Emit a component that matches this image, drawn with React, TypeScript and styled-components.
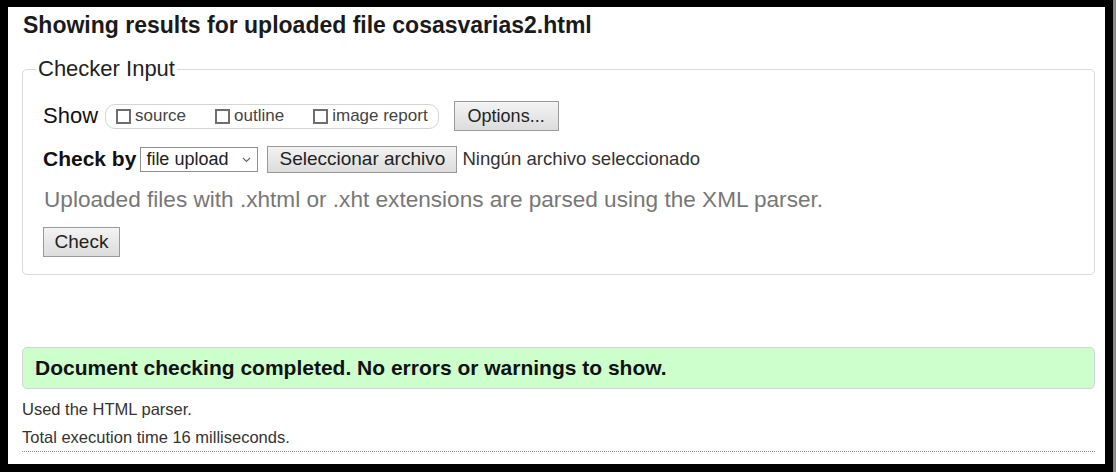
import React from "react";
import styled, { createGlobalStyle } from "styled-components";

const Global = createGlobalStyle`
  html, body { margin: 0; padding: 0; background: #000; }
  body { font-family: "Liberation Sans", Arial, sans-serif; color: #222; }
`;

const Frame = styled.div`
  width: 1116px;
  height: 472px;
  box-sizing: border-box;
  padding: 7px 8px 0 8px;
  background: #000;
  border-right: 3px solid #8a8a8a;
  overflow: hidden;
`;

const Page = styled.div`
  width: 1097px;
  height: 457px;
  background: #fff;
  box-sizing: border-box;
  padding: 4px 10px 0 14px;
  display: flex;
  flex-direction: column;
`;

const Title = styled.h2`
  margin: 0;
  padding-left: 1px;
  font-size: 23px;
  font-weight: bold;
  color: #1a1a1a;
  line-height: 28px;
`;

const Fieldset = styled.fieldset`
  margin: 17px 0 0 0;
  padding: 19px 20px 17px 20px;
  border: 1px solid #d9d9d9;
  border-radius: 5px;
  display: flex;
  flex-direction: column;
  align-items: flex-start;
`;

const Legend = styled.legend`
  font-size: 22px;
  line-height: 26px;
  color: #222;
  padding: 0 2px;
  margin-left: -7px;
`;

const Row = styled.div<{ mb?: number }>`
  display: flex;
  align-items: center;
  height: 30px;
  margin-bottom: ${(p) => p.mb ?? 0}px;
`;

const Label = styled.span<{ bold?: boolean }>`
  font-size: ${(p) => (p.bold ? 21 : 22)}px;
  color: #111;
  font-weight: ${(p) => (p.bold ? "bold" : "normal")};
  margin-right: ${(p) => (p.bold ? 4 : 7)}px;
`;

const Pill = styled.div`
  display: flex;
  align-items: center;
  height: 25px;
  box-sizing: border-box;
  border: 1px solid #d4d4d4;
  border-radius: 10px;
  padding: 0 10px 0 10px;
  gap: 29px;
`;

const CheckItem = styled.label`
  display: flex;
  align-items: center;
  font-size: 17px;
  color: #444;
  gap: 4px;
`;

const Box = styled.span`
  width: 15px;
  height: 15px;
  flex: none;
  box-sizing: border-box;
  border: 2px solid #6e6e6e;
  display: inline-block;
`;

const Button = styled.button<{ w: number; h: number; ml?: number; fs?: number }>`
  width: ${(p) => p.w}px;
  height: ${(p) => p.h}px;
  margin-left: ${(p) => p.ml ?? 0}px;
  box-sizing: border-box;
  border: 1px solid #9a9a9a;
  background: linear-gradient(#f3f3f3, #dcdcdc);
  font-family: "Liberation Sans", Arial, sans-serif;
  font-size: ${(p) => p.fs ?? 18}px;
  color: #222;
  padding: 0;
  display: flex;
  align-items: center;
  justify-content: center;
`;

const Select = styled.div`
  width: 118px;
  height: 25px;
  box-sizing: border-box;
  border: 1px solid #8f8f8f;
  display: flex;
  align-items: center;
  justify-content: space-between;
  padding: 0 6px 0 5px;
  font-size: 18px;
  color: #222;
  background: #fff;
`;

const Chevron = styled.svg`
  width: 9px;
  height: 6px;
  margin-top: 2px;
`;

const NoFile = styled.span`
  font-size: 18.6px;
  color: #333;
  margin-left: 5px;
`;

const Note = styled.p`
  margin: 13px 0 14px 1px;
  font-size: 22.6px;
  color: #777;
  line-height: 26px;
`;

const Success = styled.div`
  margin-top: 72px;
  height: 42px;
  box-sizing: border-box;
  border: 1px solid #cfd6cf;
  border-radius: 5px;
  background: #ccffcc;
  display: flex;
  align-items: center;
  padding-left: 12px;
  font-size: 21px;
  font-weight: bold;
  color: #111;
`;

const Info = styled.p`
  margin: 0;
  font-size: 16.5px;
  color: #333;
  line-height: 28px;
`;

const InfoList = styled.div`
  margin-top: 6px;
  display: flex;
  flex-direction: column;
  border-bottom: 1px dotted #888;
`;

export default function App() {
  return (
    <>
      <Global />
      <Frame>
        <Page>
          <Title>Showing results for uploaded file cosasvarias2.html</Title>
          <Fieldset>
            <Legend>Checker Input</Legend>
            <Row mb={13}>
              <Label>Show</Label>
              <Pill>
                <CheckItem>
                  <Box />
                  source
                </CheckItem>
                <CheckItem>
                  <Box />
                  outline
                </CheckItem>
                <CheckItem>
                  <Box />
                  image report
                </CheckItem>
              </Pill>
              <Button w={105} h={30} ml={15}>Options...</Button>
            </Row>
            <Row>
              <Label bold>Check by</Label>
              <Select>
                file upload
                <Chevron viewBox="0 0 9 6">
                  <path d="M1 1 L4.5 4.5 L8 1" fill="none" stroke="#666" strokeWidth="1.1" />
                </Chevron>
              </Select>
              <Button w={190} h={27} ml={9} fs={19}>Seleccionar archivo</Button>
              <NoFile>Ningún archivo seleccionado</NoFile>
            </Row>
            <Note>Uploaded files with .xhtml or .xht extensions are parsed using the XML parser.</Note>
            <Button w={77} h={30} fs={19}>Check</Button>
          </Fieldset>
          <Success>Document checking completed. No errors or warnings to show.</Success>
          <InfoList>
            <Info>Used the HTML parser.</Info>
            <Info>Total execution time 16 milliseconds.</Info>
          </InfoList>
        </Page>
      </Frame>
    </>
  );
}
